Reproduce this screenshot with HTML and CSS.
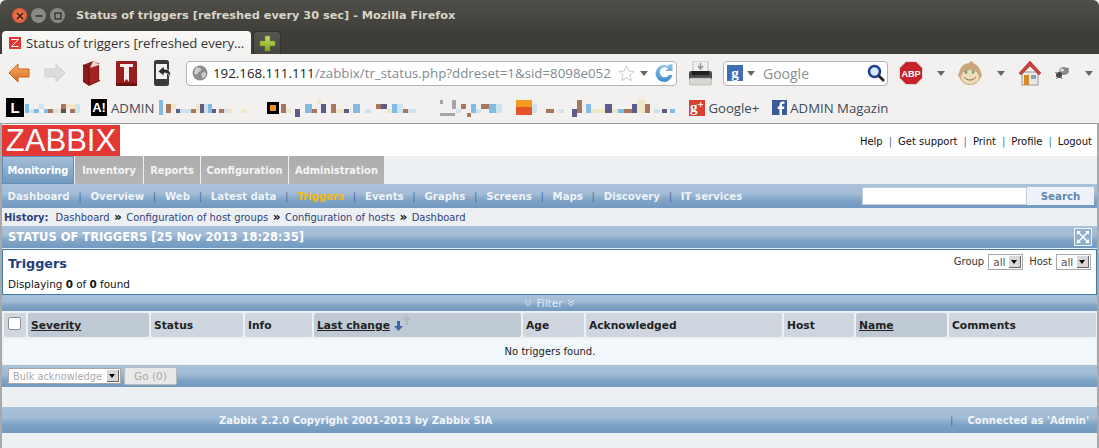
FILE: index.html
```html
<!DOCTYPE html>
<html lang="en">
<head>
<meta charset="utf-8">
<title>Status of triggers</title>
<link rel="stylesheet" href="styles.css">
</head>
<body>
<div class="window">
  <header class="titlebar">
    <div class="wm">
      <span class="wm-btn wm-close"><svg width="8" height="8" viewBox="0 0 8 8"><path d="M1 1l6 6M7 1l-6 6" stroke="#4a1a0a" stroke-width="1.6"/></svg></span>
      <span class="wm-btn"><svg width="8" height="8" viewBox="0 0 8 8"><path d="M0.5 4h7" stroke="#333" stroke-width="1.6"/></svg></span>
      <span class="wm-btn"><svg width="8" height="8" viewBox="0 0 8 8"><rect x="1" y="1" width="6" height="6" fill="none" stroke="#333" stroke-width="1.4"/></svg></span>
    </div>
    <div class="wintitle">Status of triggers [refreshed every 30 sec] - Mozilla Firefox</div>
  </header>
  <div class="tabstrip">
    <div class="tab">
      <svg class="favicon" width="12" height="12" viewBox="0 0 12 12"><rect width="12" height="12" fill="#e33734"/><path d="M2.5 2.5h7L2.5 9.5h7" fill="none" stroke="#fff" stroke-width="1"/></svg>
      <span class="tab-label">Status of triggers [refreshed every…</span>
    </div>
    <div class="newtab"><svg width="17" height="17" viewBox="0 0 17 17"><defs><linearGradient id="gp" x1="0" y1="0" x2="0" y2="1"><stop offset="0" stop-color="#c6dc6a"/><stop offset="1" stop-color="#7da51e"/></linearGradient></defs><path d="M6 1h5v5h5v5h-5v5H6v-5H1V6h5z" fill="url(#gp)" stroke="#6f8f24" stroke-width=".6"/></svg></div>
  </div>
  <div class="navbar">
    <svg class="i-back" width="22" height="20" viewBox="0 0 22 20"><defs><linearGradient id="go" x1="0" y1="0" x2="0" y2="1"><stop offset="0" stop-color="#f6b26b"/><stop offset="1" stop-color="#dc6a1e"/></linearGradient></defs><path d="M10 1L1 10l9 9v-5h11V6H10z" fill="url(#go)" stroke="#c8651f" stroke-linejoin="round"/></svg>
    <svg class="i-fwd" width="22" height="20" viewBox="0 0 22 20"><path d="M12 1l9 9-9 9v-5H1V6h11z" fill="#dcdcda" stroke="#cfcfcd" stroke-linejoin="round"/></svg>
    <svg class="i-book" width="17" height="25" viewBox="0 0 17 25"><path d="M0 4L10 0l7 3v17L6 25 0 21z" fill="#8e1b1b"/><path d="M6 7l9-4v16L6 24z" fill="#a32222"/><path d="M0 4l6 3v17" fill="none" stroke="#5f1010"/><path d="M10 0l5.500 3 1.500 0v16h-1V4L7 7z" fill="#e8d8d0"/></svg>
    <svg class="i-tbook" width="21" height="25" viewBox="0 0 21 25"><rect width="21" height="25" rx="1" fill="#971f1f"/><rect y="22" width="21" height="3" fill="#6e1212"/><path d="M4 3h13v3h-4v15l-2.500-3L8 21V6H4z" fill="#f4ecea"/></svg>
    <svg class="i-phone" width="19" height="26" viewBox="0 0 19 26"><rect x="0" y="0" width="15" height="26" rx="2.500" fill="#3a3a3a"/><rect x="2" y="4" width="11" height="15" fill="#f2f2f0"/><path d="M10 6L4 11.500 10 16v-3c3 0 5 1 6 4 1.500-5-1-8-6-8z" fill="#2a2a2a" stroke="#f2f2f0" stroke-width=".8"/></svg>
    <div class="urlbar">
      <svg class="globe" width="16" height="16" viewBox="0 0 16 16"><circle cx="8" cy="8" r="7.500" fill="#8d8d8d"/><path d="M4 2c2 1 4 0 5 2s-2 2-3 4-2 2-4 0zM10 8c2-1 4-1 4 1s-2 4-3 4-2-3-1-5z" fill="#cfcfcf"/></svg>
      <span class="url"><span class="url-host">192.168.111.111</span>/zabbix/tr_status.php?ddreset=1&amp;sid=8098e052</span>
      <svg class="star" width="17" height="17" viewBox="0 0 17 17"><path d="M8.500 1l2.200 5 5.300.5-4 3.600 1.200 5.400-4.700-2.800-4.700 2.800L5 10.100 1 6.500 6.300 6z" fill="#fff" stroke="#c9c9c9"/></svg>
      <span class="caret caret-url"></span>
      <svg class="reload" width="20" height="20" viewBox="0 0 19 20"><defs><linearGradient id="gr" x1="0" y1="0" x2="0" y2="1"><stop offset="0" stop-color="#8fc3e8"/><stop offset="1" stop-color="#3f8ccb"/></linearGradient></defs><path d="M13 2l5-1v7h-7l2.500-2.500A5 5 0 1 0 14.500 12H18a8.500 8.500 0 1 1-3.500-8.500z" fill="url(#gr)"/></svg>
    </div>
    <svg class="i-print" width="23" height="25" viewBox="0 0 23 25"><rect x="4" y="0" width="15" height="12" fill="#f0f0ee" stroke="#aaa" stroke-width=".7"/><path d="M11.500 2v5M9 5l2.500 3L14 5" stroke="#999" fill="none" stroke-width="1.500"/><rect x="0" y="10" width="23" height="11" rx="2" fill="#4a4a4a"/><rect x="3" y="10" width="17" height="4" fill="#1f1f1f"/><rect x="0" y="17" width="23" height="7" rx="2" fill="#d6d6d2" stroke="#999" stroke-width=".5"/></svg>
    <div class="searchbar">
      <svg class="g-icon" width="16" height="16" viewBox="0 0 16 16"><rect width="16" height="16" fill="#3f6fb8"/><text class="t-g" x="8" y="12.500" text-anchor="middle">g</text></svg>
      <span class="caret caret-search"></span>
      <span class="search-label">Google</span>
      <svg class="lens" width="18" height="18" viewBox="0 0 18 18"><circle cx="7.500" cy="7.500" r="5.500" fill="#d8e8f6" stroke="#1f3f90" stroke-width="2.600"/><path d="M11.500 11.500L17 17" stroke="#222" stroke-width="2.600"/></svg>
    </div>
    <svg class="i-abp" width="24" height="24" viewBox="0 0 24 24"><path d="M7 .5h10L23.500 7v10L17 23.500H7L.5 17V7z" fill="#c7222a" stroke="#d8d8d8"/><text class="t-abp" x="12" y="16" text-anchor="middle">ABP</text></svg>
    <span class="caret caret-abp"></span>
    <svg class="i-monkey" width="24" height="25" viewBox="0 0 24 25"><path d="M13 0c2 1 3 2 3 4h-5c0-2 1-3 2-4z" fill="#c89f74"/><circle cx="2.500" cy="14" r="2.500" fill="#d8b48c"/><circle cx="21.500" cy="14" r="2.500" fill="#d8b48c"/><circle cx="12" cy="13" r="11" fill="#c9a57e"/><ellipse cx="12" cy="16" rx="9" ry="7" fill="#eedcb8"/><ellipse cx="8" cy="11" rx="1.300" ry="2" fill="#7a9a78"/><ellipse cx="15" cy="11" rx="1.300" ry="2" fill="#7a9a78"/><path d="M6 16c3 4 9 4 12 0" fill="none" stroke="#7a6a50"/></svg>
    <span class="caret caret-monkey"></span>
    <svg class="i-home" width="22" height="25" viewBox="0 0 22 25"><rect x="3" y="11" width="16" height="13" fill="#e8e8e6" stroke="#9a9a9a"/><rect x="5" y="14" width="5" height="10" fill="#d98a1e"/><rect x="12" y="14" width="5" height="4" fill="#8ea0b0"/><path d="M11 0L0 12l2 2 9-9 9 9 2-2z" fill="#c8413a" stroke="#a52a24" stroke-width=".5"/></svg>
    <svg class="i-fly" width="17" height="14" viewBox="0 0 17 14"><ellipse cx="10" cy="5" rx="5" ry="4" fill="#8a8a8a"/><ellipse cx="8" cy="4" rx="2" ry="1.500" fill="#ddd"/><circle cx="5" cy="9" r="3" fill="#444"/><path d="M1 6l3 2M2 13l3-3M8 13l-1-3M15 2l-3 2" stroke="#777"/></svg>
    <span class="caret caret-fly"></span>
  </div>
  <div class="bookmarks">
    <span class="bm-l">L</span>
    <svg class="mosaic m-a" width="55" height="18" viewBox="0 0 55 18"><path class="c-blue" d="M0 5h4v9H0zM9 10h5v4H9zM19 10h4v4h-4z"/><path class="c-pale" d="M4 10h5v4H4zM14 5h5v5h-5zM28 10h4v4h-4zM50 5h5v9h-5z"/><path class="c-brown" d="M23 10h5v4h-5zM36 5h5v5h-5zM45 10h5v4h-5z"/><path class="c-cream" d="M41 5h9v5h-9zM32 10h4v4h-4z"/><path class="c-dark" d="M36 10h5v4h-5z"/></svg>
    <span class="bm-a">A!</span>
    <span class="bm-text bm-admin">ADMIN</span>
    <svg class="mosaic m-b" width="92" height="18" viewBox="0 0 92 18"><path class="c-blue" d="M0 1h4v15H0zM49 5h4v9h-4z"/><path class="c-brown" d="M7 5h5v9H7zM32 10h5v4h-5zM60 10h5v4h-5z"/><path class="c-cream" d="M12 5h5v5h-5zM37 5h4v9h-4zM69 10h4v4h-4zM82 10h6v4h-6z"/><path class="c-pale" d="M21 10h5v4h-5zM45 5h4v9h-4zM26 10h6v4h-6zM65 10h4v4h-4z"/><path class="c-purple" d="M17 10h4v4h-4zM41 5h4v9h-4zM53 10h4v4h-4z"/></svg>
    <span class="bm-sq"></span>
    <svg class="mosaic m-c" width="141" height="18" viewBox="0 0 141 18"><path class="c-brown" d="M0 5h5v9H0zM31 10h5v4h-5zM50 5h5v9h-5zM95 5h5v5h-5zM122 10h5v4h-5z"/><path class="c-cream" d="M5 10h5v4H5zM36 1h4v4h-4zM55 10h8v4h-8zM106 10h5v4h-5z"/><path class="c-blue" d="M24 5h7v9h-7zM72 5h7v9h-7zM111 5h5v9h-5z"/><path class="c-purple" d="M14 10h5v9h-5zM40 5h5v9h-5zM63 10h5v4h-5zM100 5h6v5h-6z"/><path class="c-pale" d="M84 10h6v4h-6zM116 5h6v9h-6zM127 10h8v4h-8z"/></svg>
    <svg class="mosaic m-d" width="62" height="18" viewBox="0 0 62 18"><path class="c-grey" d="M0 1h3v4H0zM0 14h15v3H0zM12 1h4v9h-4z"/><path class="c-pale" d="M16 10h5v4h-5zM36 10h5v4h-5zM56 5h6v9h-6z"/><path class="c-brown" d="M21 5h5v5h-5zM41 5h8v5h-8zM27 14h4v4h-4z"/><path class="c-blue" d="M31 5h5v9h-5zM49 5h7v9h-7z"/></svg>
    <span class="bm-orange"></span>
    <svg class="mosaic m-e" width="143" height="18" viewBox="0 0 143 18"><path class="c-brown" d="M14 10h8v4h-8zM45 1h5v13h-5zM92 10h8v4h-8zM113 5h5v9h-5z"/><path class="c-pale" d="M0 5h5v9H0zM27 10h5v4h-5zM122 10h6v4h-6z"/><path class="c-purple" d="M40 10h5v9h-5zM73 5h7v9h-7zM100 5h5v9h-5zM130 10h5v4h-5z"/><path class="c-blue" d="M54 5h5v9h-5zM86 10h6v4h-6zM138 10h5v4h-5z"/><path class="c-cream" d="M59 10h14v4H59zM80 10h6v4h-6zM105 1h8v13h-8z"/></svg>
    <svg class="bm-icon bm-gplus" width="16" height="16" viewBox="0 0 16 16"><rect width="16" height="16" fill="#d8412f"/><text class="t-gp" x="1" y="12">g</text><text class="t-gp2" x="9" y="8">+</text></svg>
    <span class="bm-text bm-gtext">Google+</span>
    <svg class="bm-icon bm-fb" width="15" height="15" viewBox="0 0 15 15"><rect width="15" height="15" fill="#3b5998"/><path d="M10 15V9h2l.4-2.400H10V5c0-.8.3-1.200 1.200-1.200h1.300V1.500h-2C8.500 1.500 7.500 2.800 7.500 4.700v1.900H5.700V9h1.800v6z" fill="#fff"/></svg>
    <span class="bm-text">ADMIN Magazin</span>
  </div>
  <div class="page">
    <div class="top">
      <div class="logo">ZABBIX</div>
      <nav class="toplinks"><a>Help</a><i>|</i><a>Get support</a><i>|</i><a>Print</a><i>|</i><a>Profile</a><i>|</i><a>Logout</a></nav>
    </div>
    <nav class="mainnav">
      <a class="mn mn-active">Monitoring</a><a class="mn mn-inv">Inventory</a><a class="mn mn-rep">Reports</a><a class="mn mn-conf">Configuration</a><a class="mn mn-adm">Administration</a>
    </nav>
    <div class="subnav bar">
      <div class="sublinks"><a>Dashboard</a><i>|</i><a>Overview</a><i>|</i><a>Web</a><i>|</i><a>Latest data</a><i>|</i><a class="cur">Triggers</a><i>|</i><a>Events</a><i>|</i><a>Graphs</a><i>|</i><a>Screens</a><i>|</i><a>Maps</a><i>|</i><a>Discovery</a><i>|</i><a>IT services</a></div>
      <div class="searchform"><span class="s-input"></span><span class="s-btn">Search</span></div>
    </div>
    <div class="history"><b>History:</b><a>Dashboard</a><em>»</em><a>Configuration of host groups</a><em>»</em><a>Configuration of hosts</a><em>»</em><a>Dashboard</a></div>
    <div class="statusbar bar">
      <span>STATUS OF TRIGGERS [25 Nov 2013 18:28:35]</span>
      <svg class="fs" width="18" height="18" viewBox="0 0 18 18"><rect x=".5" y=".5" width="17" height="17" fill="#8fb0cf" stroke="#eef3f8"/><path d="M3 3l12 12M15 3L3 15" stroke="#fff" stroke-width="1.500"/><path d="M3 3h4L3 7zM15 3h-4l4 4zM3 15h4l-4-4zM15 15h-4l4-4z" fill="#fff"/></svg>
    </div>
    <section class="filterbox">
      <div class="fb-left">
        <h2>Triggers</h2>
        <p>Displaying <b>0</b> of <b>0</b> found</p>
      </div>
      <div class="fb-right">
        <label>Group</label><span class="sel sel-g">all<s></s></span>
        <label>Host</label><span class="sel sel-h">all<s></s></span>
      </div>
    </section>
    <div class="filterbar bar">
      <svg width="8" height="8" viewBox="0 0 8 8"><path d="M1 1l3 3 3-3M1 4l3 3 3-3" fill="none" stroke="#dfe8f0"/></svg>
      <span>Filter</span>
      <svg width="8" height="8" viewBox="0 0 8 8"><path d="M1 1l3 3 3-3M1 4l3 3 3-3" fill="none" stroke="#dfe8f0"/></svg>
    </div>
    <div class="tbl">
      <div class="th th-check"><span class="check"></span></div>
      <div class="th sorted"><u>Severity</u></div>
      <div class="th">Status</div>
      <div class="th">Info</div>
      <div class="th sorted"><u>Last change</u>
        <svg class="sortarrows" width="18" height="16" viewBox="0 0 18 16"><path d="M3 6h3v5h3l-4.500 5L0 11h3z" fill="#4166a8"/><path d="M11 10h3V5h3l-4.500-5L8 5h3z" fill="#b5bcc4"/></svg>
      </div>
      <div class="th">Age</div>
      <div class="th">Acknowledged</div>
      <div class="th">Host</div>
      <div class="th sorted"><u>Name</u></div>
      <div class="th">Comments</div>
      <div class="empty">No triggers found.</div>
    </div>
    <div class="actionbar bar">
      <span class="sel sel-bulk">Bulk acknowledge<s></s></span>
      <span class="go">Go (0)</span>
    </div>
    <footer class="foot bar">
      <span class="foot-copy">Zabbix 2.2.0 Copyright 2001-2013 by Zabbix SIA</span>
      <i>|</i>
      <span class="foot-user">Connected as 'Admin'</span>
    </footer>
  </div>
</div>
</body>
</html>
```

FILE: styles.css
```css
* { box-sizing: border-box; }
html, body { margin: 0; padding: 0; height: 448px; overflow: hidden; background: #ecf0f3; }
body { width: 1099px; font-family: "DejaVu Sans", sans-serif; font-size: 10.5px; color: #111; }
.window { display: flex; flex-direction: column; height: 448px; }

.titlebar { height: 31px; flex: none; display: flex; align-items: center; background: linear-gradient(#4f4e48, #403f3a); padding-left: 12px; border-radius: 6px 6px 0 0; }
.wm { display: flex; gap: 4px; }
.wm-btn { width: 15px; height: 15px; border-radius: 50%; background: #8a8983; display: flex; align-items: center; justify-content: center; }
.wm-close { background: radial-gradient(#ef8a5c, #d9472b); }
.wintitle { margin-left: 11px; font: bold 11.3px "DejaVu Sans", sans-serif; color: #d8d5c9; white-space: nowrap; }

.tabstrip { height: 23px; flex: none; display: flex; align-items: flex-end; background: #3e3d38; padding-left: 2px; }
.tab { width: 249px; height: 23px; background: linear-gradient(#faf9f7, #f2f1ef); border-radius: 4px 4px 0 0; display: flex; align-items: center; padding-left: 7px; }
.favicon { flex: none; }
.tab-label { margin-left: 5px; font: 13.15px "Open Sans", sans-serif; color: #333; white-space: nowrap; }
.newtab { width: 28px; height: 23px; margin-left: 2px; background: linear-gradient(#55544e, #46453f); border: 1px solid #33322e; border-bottom: 0; border-radius: 4px 4px 0 0; display: flex; align-items: center; justify-content: center; }

.navbar { height: 38px; flex: none; display: flex; align-items: center; background: #f2f1ef; padding-left: 8px; position: relative; }
.i-fwd { margin-left: 14px; }
.i-book { margin-left: 17px; }
.i-tbook { margin-left: 16px; }
.i-phone { margin-left: 17px; }
.urlbar { margin-left: 13px; width: 491px; height: 25px; background: #fff; border: 1px solid #b5b4b0; border-radius: 4px; display: flex; align-items: center; padding-left: 5px; }
.globe { flex: none; }
.url { margin-left: 5px; width: 398px; font: 13.3px "Open Sans", sans-serif; color: #7f8a94; white-space: nowrap; flex: none; }
.url-host { color: #222; }
.star { margin-left: 7px; flex: none; }
.caret { width: 0; height: 0; flex: none; border-left: 4px solid transparent; border-right: 4px solid transparent; border-top: 5px solid #666; }
.caret-url { margin-left: 5px; }
.reload { margin-left: 6px; flex: none; }
.i-print { margin-left: 12px; flex: none; }
.searchbar { margin-left: 11px; width: 165px; height: 25px; background: #fff; border: 1px solid #b5b4b0; border-radius: 4px; display: flex; align-items: center; padding-left: 3px; }
.g-icon { flex: none; }
.t-g { font: bold 15px "Liberation Serif", serif; fill: #fff; }
.t-abp { font: bold 9px "Liberation Sans", sans-serif; fill: #fff; }
.t-gp { font: bold 15px "Liberation Serif", serif; fill: #fff; }
.t-gp2 { font: bold 9px "Liberation Sans", sans-serif; fill: #fff; }
.caret-search { margin-left: 4px; }
.search-label { margin-left: 8px; font: 14px "Open Sans", sans-serif; color: #8a8f96; }
.lens { margin-left: auto; margin-right: 2px; }
.i-abp { margin-left: 11px; flex: none; }
.caret-abp { margin-left: 14px; }
.i-monkey { margin-left: 13px; flex: none; }
.caret-monkey { margin-left: 15px; }
.i-home { margin-left: 14px; flex: none; }
.i-fly { margin-left: 13px; flex: none; }
.caret-fly { margin-left: 14px; }

.bookmarks { height: 32px; flex: none; display: flex; align-items: center; background: #f2f1ef; border-bottom: 1px solid #9b9b98; padding-left: 6px; }
.bm-l { width: 18px; height: 19px; background: #000; color: #fff; font: bold 15px/19px "Liberation Sans", sans-serif; text-align: center; flex: none; }
.mosaic { flex: none; }
.c-blue { fill: #84bbe2; }
.c-pale { fill: #cfe3ec; }
.c-brown { fill: #a8755f; }
.c-cream { fill: #efe6c4; }
.c-dark { fill: #555; }
.c-purple { fill: #5f5c88; }
.c-grey { fill: #a5a5a5; }
.m-a { margin-left: 1px; }
.bm-a { margin-left: 11px; width: 16px; height: 17px; background: #000; color: #fff; font: bold 13px/17px "Liberation Sans", sans-serif; text-align: center; flex: none; }
.bm-text { font: 13.2px "Open Sans", sans-serif; color: #3c4a58; white-space: nowrap; }
.bm-admin { margin-left: 4px; }
.m-b { margin-left: 5px; }
.bm-sq { margin-left: 16px; width: 12px; height: 12px; background: #f0901e; border: 3px solid #000; flex: none; }
.m-c { margin-left: 2px; }
.m-d { margin-left: 18px; }
.bm-orange { margin-left: 14px; width: 16px; height: 15px; background: linear-gradient(#f39a20 50%, #e4542a 50%); flex: none; }
.bm-icon { flex: none; }
.bm-gplus { margin-left: 14px; }
.bm-gtext { margin-left: 3px; }
.bm-fb { margin-left: 13px; margin-right: 3px; }

.page { flex: 1; background: #ecf0f3; border-left: 2px solid #a9a9a9; border-right: 2px solid #a9a9a9; min-height: 0; }
.top { height: 32px; background: #fff; display: flex; align-items: flex-end; justify-content: space-between; padding-right: 5px; }
.logo { width: 118px; height: 31px; background: #e33734; color: #fff; font: 31px/31px "Liberation Sans", sans-serif; text-align: center; }
.toplinks { align-self: center; display: flex; gap: 6px; padding-top: 2px; font-size: 10px; color: #111; }
.toplinks i { font-style: normal; color: #4a6fa0; }

.bar { background: linear-gradient(#a9c1d9, #a3bcd6 40%, #7fa3c6 68%, #7299bf); }
.mainnav { height: 28px; display: flex; gap: 1px; align-items: stretch; }
.mn { background: linear-gradient(#adadad, #b4b4b4); color: #f4f4f4; font-weight: bold; font-size: 9.9px; display: flex; align-items: center; justify-content: center; }
.mn-active { width: 72px; background: linear-gradient(#a4bdd7, #7299bf); border: 1px solid #5f90bd; color: #fff; }
.mn-inv { width: 68px; }
.mn-rep { width: 56px; }
.mn-conf { width: 87px; }
.mn-adm { width: 95px; }

.subnav { height: 24px; display: flex; align-items: center; justify-content: space-between; padding: 0 3px 0 5.5px; }
.sublinks { display: flex; gap: 8.7px; color: #eef3f8; font-weight: bold; font-size: 10.2px; }
.sublinks i { font-style: normal; font-weight: normal; color: #4a6fa0; }
.sublinks .cur { color: #f5b90d; }
.searchform { display: flex; height: 18px; }
.s-input { width: 165px; background: #fff; border: 1px solid #bccddd; }
.s-btn { width: 67px; background: #eef2f6; color: #5f88b5; font-weight: bold; font-size: 10.2px; display: flex; align-items: center; justify-content: center; }

.history { height: 18px; display: flex; align-items: center; padding-left: 2px; color: #2e3f78; font-size: 9.95px; white-space: nowrap; }
.history b { margin-right: 7px; }
.history em { font-style: normal; font-weight: bold; font-size: 12px; color: #111; margin: 0 4.5px; }

.statusbar { height: 22px; display: flex; align-items: center; justify-content: space-between; color: #fff; font-weight: bold; font-size: 11.5px; padding: 0 5px 0 6px; }
.filterbox { height: 46px; margin-top: 1px; background: #fff; border: 1px solid #3f7aa8; display: flex; justify-content: space-between; padding: 3px 5px 0 5px; }
.fb-left { padding-top: 3px; }
.filterbox h2 { margin: 0; font-size: 12.8px; color: #1e3d80; font-weight: bold; }
.filterbox p { margin: 7px 0 0; font-size: 10.4px; }
.fb-right { display: flex; align-items: center; height: 17px; gap: 4px; font-size: 10px; color: #333; }
.sel { display: inline-flex; align-items: center; justify-content: space-between; background: #fff; border: 1px solid #a8a8a8; height: 16px; padding-left: 4px; font-size: 10.5px; color: #555; white-space: nowrap; position: relative; }
.sel s { display: block; flex: none; width: 12px; height: 12px; margin-right: 1px; background: #d8d8d8; border-right: 1px solid #666; border-bottom: 1px solid #666; position: relative; }
.sel s::after { content: ""; position: absolute; left: 2px; top: 4px; border-left: 3.5px solid transparent; border-right: 3.5px solid transparent; border-top: 4px solid #000; }
.sel-g, .sel-h { width: 35px; }
.sel-g { margin-right: 2px; }

.filterbar { height: 16px; display: flex; align-items: center; justify-content: center; gap: 4px; color: #dfe8f0; font-size: 10.5px; }
.tbl { display: grid; grid-template-columns: 22px 121px 92px 67px 207px 61px 196px 70px 91px 1fr; grid-template-rows: 24px 25px; gap: 2px; padding: 2px 1px 0 2px; }
.th { background: #cfd6e0; border-radius: 2px; display: flex; align-items: center; padding: 1px 0 0 3px; font-weight: bold; font-size: 10.7px; color: #222; }
.sorted { background: #bfcad5; }
.th-check { padding: 0 0 3px 4px; }
.check { width: 13px; height: 13px; background: #fff; border: 1px solid #8e8e8e; border-radius: 2px; }
.sortarrows { margin-left: 4px; margin-top: -5px; }
.empty { grid-column: 1 / -1; background: #f2f7fb; text-align: center; font-size: 10px; line-height: 25px; color: #222; }

.actionbar { height: 22px; margin-top: 1px; display: flex; align-items: center; gap: 3px; padding-left: 6px; }
.sel-bulk { width: 113px; height: 16px; font-size: 9.8px; color: #aaa; }
.go { height: 18px; width: 53px; background: #e9e9e9; border: 1px solid #bbb; border-radius: 2px; color: #aaa; font-size: 10.5px; display: flex; align-items: center; justify-content: center; }

.foot { height: 26px; margin-top: 20px; display: flex; align-items: center; color: #f2f5f8; font-weight: bold; font-size: 10px; }
.foot-copy { margin-left: 217px; }
.foot i { margin-left: auto; font-style: normal; font-weight: normal; color: #4a6fa0; }
.foot-user { margin-left: 14px; margin-right: 8px; }
```
